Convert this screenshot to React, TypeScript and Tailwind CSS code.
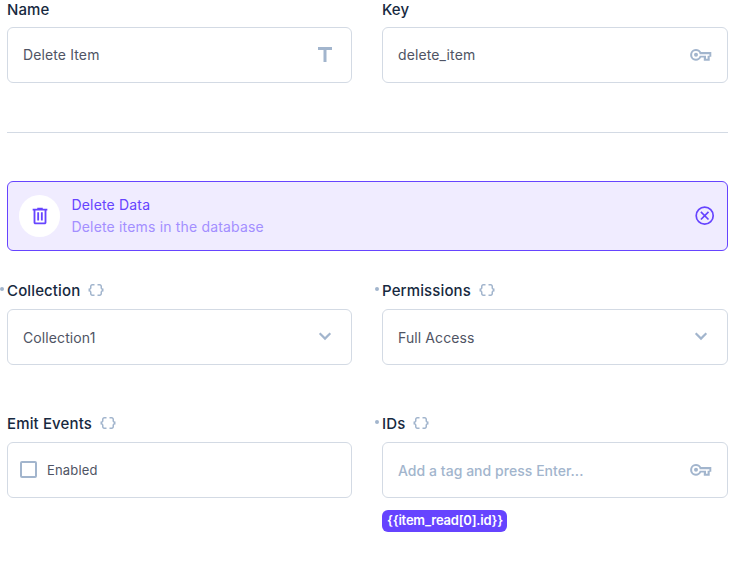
import type { ReactNode } from "react";
import { MdTitle, MdDataObject } from "react-icons/md";

function KeyIcon() {
  return (
    <svg className="size-6" viewBox="0 0 24 24" fill="currentColor">
      <path
        fillRule="evenodd"
        d="M7 17.8a5.9 5.9 0 1 1 5.1-8.9H22.3v4.9H20.7v4h-5.9v-3.2h-2.7A5.9 5.9 0 0 1 7 17.8zm0-2.1a3.8 3.8 0 0 0 3.7-2.9H17v2.9h1.6v-3h1.8v-1.4H10.7A3.8 3.8 0 1 0 7 15.7zm0-1.9a2 2 0 1 0 0-4 2 2 0 0 0 0 4z"
      />
    </svg>
  );
}

function TrashIcon() {
  return (
    <svg className="-mt-px size-[22px]" viewBox="0 0 24 24" fill="currentColor">
      <path
        fillRule="evenodd"
        d="M7 21q-.825 0-1.412-.587Q5 19.825 5 19V6H4V4h5V3h6v1h5v2h-1v13q0 .825-.587 1.413Q17.825 21 17 21zM17 6H7v13h10zM9 17h2V8H9zm4 0h2V8h-2z"
      />
    </svg>
  );
}

function CancelIcon() {
  return (
    <svg className="size-[22px]" viewBox="0 0 22 22" fill="none" stroke="currentColor" strokeWidth="1.7">
      <circle cx="10.7" cy="10.7" r="8.5" />
      <path d="m6.9 6.9 7.6 7.6m0-7.6-7.6 7.6" />
    </svg>
  );
}

function Label({ children, required, raw }: { children: ReactNode; required?: boolean; raw?: boolean }) {
  return (
    <div className="relative flex h-5 items-center text-[15px] font-medium leading-5 tracking-[0.13px] text-[#172940]">
      {required && <span className="absolute -left-[7px] top-1.5 size-1 rounded-full bg-[#a2b5cd]" />}
      <span>{children}</span>
      {raw && <MdDataObject className="-mt-0.5 ml-[7px] size-[18px] text-[#a2b5cd]" />}
    </div>
  );
}

function Field({ children, icon, placeholder, select }: { children: ReactNode; icon?: ReactNode; placeholder?: boolean; select?: boolean }) {
  return (
    <div className="flex h-14 items-center justify-between rounded-md border border-[#d3dae4] pl-[15px] pr-3.5 text-[#a2b5cd]">
      <span
        className={
          placeholder
            ? "pt-0.5 text-sm font-medium tracking-[0.04px]"
            : select
              ? "pt-0.5 text-sm tracking-[0.1px] text-[#4f5464]"
              : "text-sm tracking-[0.12px] text-[#4f5464]"
        }
      >
        {children}
      </span>
      {icon}
    </div>
  );
}

function Chevron() {
  return (
    <svg className="-mt-0.5 size-6" viewBox="0 0 24 24" fill="none" stroke="currentColor" strokeWidth="2.2">
      <path d="m6.7 9.3 5.3 5.3 5.3-5.3" />
    </svg>
  );
}

export default function App() {
  return (
    <main className="h-[563px] w-[736px] overflow-hidden bg-white pl-[7px] pr-2 font-['Inter',sans-serif]">
      <div className="grid grid-cols-[345px_346px] gap-x-[30px]">
        <div className="flex flex-col gap-[7px]">
          <Label>Name</Label>
          <Field icon={<MdTitle className="size-6" />}>Delete Item</Field>
        </div>
        <div className="flex flex-col gap-[7px]">
          <Label>Key</Label>
          <Field icon={<KeyIcon />}>delete_item</Field>
        </div>
      </div>
      <hr className="mt-[49px] border-[#d3dae4]" />
      <div className="mt-12 flex h-[70px] items-center rounded-md border border-[#6644ff] bg-[#f0ecff] pl-[11px] pr-[11px] text-[#6644ff]">
        <div className="flex h-[42px] w-[41px] items-center justify-center rounded-full bg-white">
          <TrashIcon />
        </div>
        <div className="ml-[11.5px] flex-1 text-sm leading-[22px] tracking-[0.17px]">
          <div>Delete Data</div>
          <div className="text-[#a38fff]">Delete items in the database</div>
        </div>
        <CancelIcon />
      </div>
      <div className="mt-[30px] grid grid-cols-[345px_346px] gap-x-[30px] gap-y-[49px]">
        <div className="flex flex-col gap-2">
          <Label required raw>Collection</Label>
          <Field select icon={<Chevron />}>Collection1</Field>
        </div>
        <div className="flex flex-col gap-2">
          <Label required raw>Permissions</Label>
          <Field select icon={<Chevron />}>Full Access</Field>
        </div>
        <div className="flex flex-col gap-2">
          <Label raw>Emit Events</Label>
          <div className="flex h-14 items-center rounded-md border border-[#d3dae4] pl-3">
            <span className="-mt-px size-[17px] rounded-xs border-2 border-[#a2b5cd]" />
            <span className="ml-2.5 pt-px text-[13px] tracking-[0.16px] text-[#4f5464]">Enabled</span>
          </div>
        </div>
        <div className="flex flex-col gap-2">
          <Label required raw>IDs</Label>
          <Field placeholder icon={<KeyIcon />}>Add a tag and press Enter...</Field>
          <div className="mt-1 flex h-[22px] w-[125px] items-center self-start rounded-md bg-[#6644ff] pl-[5px] text-[13px] font-semibold tracking-[-0.2px] text-white">
            {"{{item_read[0].id}}"}
          </div>
        </div>
      </div>
    </main>
  );
}
